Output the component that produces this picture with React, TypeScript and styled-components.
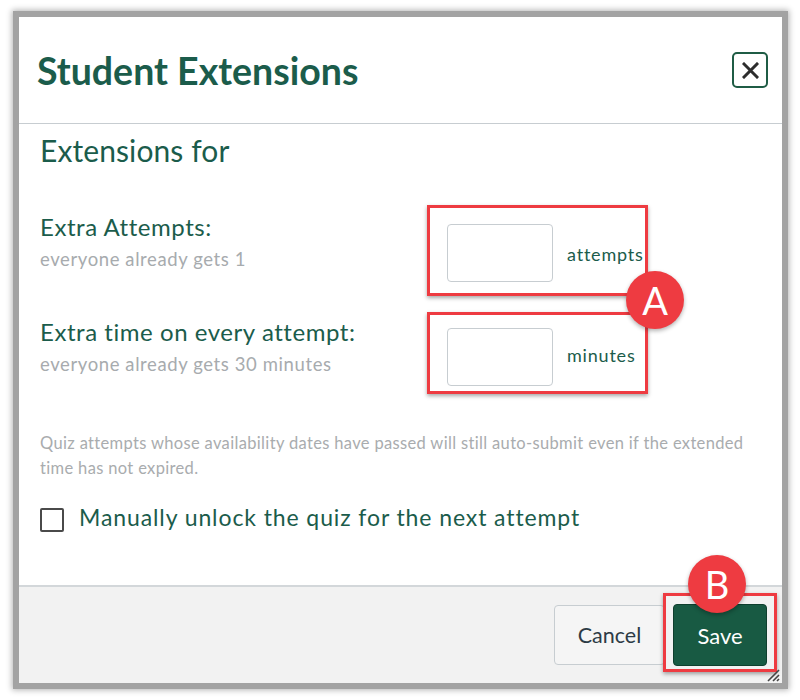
import React from "react";
import styled, { createGlobalStyle } from "styled-components";

const GREEN = "#1b5c4b";
const RED = "#ee3b41";

const Global = createGlobalStyle`
  html, body { margin: 0; padding: 0; background: #ffffff; }
  body { font-family: Lato, "Open Sans", "Liberation Sans", sans-serif; }
  * { box-sizing: border-box; }
`;

const Page = styled.div`
  width: 800px;
  height: 700px;
  padding: 11px 0 0 13px;
`;

const Dialog = styled.div`
  position: relative;
  width: 775px;
  height: 678px;
  border: 6px solid #a3a3a3;
  box-shadow: 0 0 6px 1px rgba(0, 0, 0, 0.3);
  background: #ffffff;
  display: flex;
  flex-direction: column;
`;

const Header = styled.header`
  height: 107px;
  flex: none;
  display: flex;
  align-items: center;
  justify-content: space-between;
  padding: 0 14px 0 18px;
  border-bottom: 1px solid #c7cdd1;
`;

const Title = styled.h1`
  margin: 0;
  font-size: 37.5px;
  line-height: 1.2;
  font-weight: 700;
  color: ${GREEN};
`;

const CloseButton = styled.button`
  width: 36px;
  height: 36px;
  border: 2px solid #1f5c45;
  border-radius: 5px;
  background: #ffffff;
  display: flex;
  align-items: center;
  justify-content: center;
  padding: 0;
  color: #2d2d2d;
`;

const Body = styled.main`
  flex: 1;
  padding: 8px 0 0 21px;
`;

const Heading = styled.h2`
  margin: 0 0 37px;
  font-size: 30px;
  line-height: 1.2;
  font-weight: 400;
  color: ${GREEN};
  letter-spacing: 0.1px;
`;

const Row = styled.div<{ $gap: number }>`
  display: flex;
  align-items: flex-start;
  margin-bottom: ${(p) => p.$gap}px;
`;

const LabelCol = styled.div<{ $top: number }>`
  width: 387px;
  flex: none;
  padding-top: ${(p) => p.$top}px;
`;

const Label = styled.div`
  font-size: 24px;
  line-height: 1.2;
  letter-spacing: 0.55px;
  color: ${GREEN};
`;

const Hint = styled.div`
  margin-top: 6px;
  font-size: 18.5px;
  line-height: 1.2;
  letter-spacing: 0.6px;
  color: #a7abae;
`;

const Highlight = styled.div<{ $h: number; $top: number }>`
  width: 221px;
  height: ${(p) => p.$h}px;
  border: 3px solid ${RED};
  box-shadow: 0 2px 4px rgba(0, 0, 0, 0.35);
  display: flex;
  align-items: flex-start;
  padding: ${(p) => p.$top}px 0 0 17px;
`;

const NumberInput = styled.input`
  width: 106px;
  height: 58px;
  border: 1px solid #c7cdd1;
  border-radius: 4px;
  background: #ffffff;
  margin: 0;
  flex: none;
`;

const Unit = styled.span`
  margin-left: 14px;
  align-self: center;
  margin-top: -8px;
  font-size: 18px;
  line-height: 1.2;
  letter-spacing: 0.8px;
  color: ${GREEN};
  white-space: nowrap;
`;

const Note = styled.p`
  margin: 0 0 23px;
  width: 715px;
  font-size: 16.5px;
  line-height: 25px;
  letter-spacing: 0.34px;
  color: #a9acae;
`;

const CheckRow = styled.label`
  display: flex;
  align-items: center;
  gap: 15px;
`;

const CheckBox = styled.span`
  width: 24px;
  height: 24px;
  border: 2px solid #4a4a4a;
  border-radius: 2px;
  flex: none;
  background: #ffffff;
  margin-top: 4px;
`;

const CheckLabel = styled.span`
  font-size: 23px;
  line-height: 1.2;
  letter-spacing: 0.9px;
  color: ${GREEN};
`;

const Footer = styled.footer`
  height: 98px;
  flex: none;
  background: #f2f2f2;
  border-top: 2px solid #d3d7da;
  display: flex;
  align-items: flex-start;
  justify-content: flex-end;
  padding: 0 5px 0 0;
`;

const CancelButton = styled.button`
  width: 111px;
  height: 60px;
  margin-right: -2px;
  margin-top: 18px;
  background: #f5f5f5;
  border: 1px solid #c7cdd1;
  border-radius: 4px;
  font-family: inherit;
  font-size: 21.5px;
  color: #2d3b45;
`;

const SaveFrame = styled.div`
  position: relative;
  margin-top: 6px;
  border: 3px solid ${RED};
  padding: 8px 7px 3px 7px;
  box-shadow: 0 2px 4px rgba(0, 0, 0, 0.35);
`;

const SaveButton = styled.button`
  width: 94px;
  height: 62px;
  background: #185a43;
  border: 1px solid #0f3f2e;
  border-radius: 4px;
  font-family: inherit;
  font-size: 22px;
  color: #ffffff;
  display: block;
`;

const Badge = styled.div<{ $x: number; $y: number }>`
  position: absolute;
  left: ${(p) => p.$x}px;
  top: ${(p) => p.$y}px;
  width: 58px;
  height: 58px;
  border-radius: 50%;
  background: ${RED};
  box-shadow: 0 2px 4px rgba(0, 0, 0, 0.3);
  color: #ffffff;
  font-size: 38px;
  line-height: 58px;
  text-align: center;
  z-index: 2;
`;

const Grip = styled.svg`
  position: absolute;
  right: 2px;
  bottom: 1px;
`;

export default function App() {
  return (
    <Page>
      <Global />
      <Dialog>
        <Header>
          <Title>Student Extensions</Title>
          <CloseButton aria-label="Close">
            <svg width="17" height="17" viewBox="0 0 17 17">
              <path d="M2 2 L15 15 M15 2 L2 15" stroke="#2d2d2d" strokeWidth="3" strokeLinecap="square" />
            </svg>
          </CloseButton>
        </Header>
        <Body>
          <Heading>Extensions for</Heading>
          <Row $gap={16}>
            <LabelCol $top={8}>
              <Label>Extra Attempts:</Label>
              <Hint>everyone already gets 1</Hint>
            </LabelCol>
            <Highlight $h={91} $top={16}>
              <NumberInput type="text" />
              <Unit>attempts</Unit>
            </Highlight>
          </Row>
          <Row $gap={37}>
            <LabelCol $top={6}>
              <Label>Extra time on every attempt:</Label>
              <Hint>everyone already gets 30 minutes</Hint>
            </LabelCol>
            <Highlight $h={82} $top={13}>
              <NumberInput type="text" />
              <Unit>minutes</Unit>
            </Highlight>
          </Row>
          <Note>
            Quiz attempts whose availability dates have passed will still auto-submit even if the extended time has not expired.
          </Note>
          <CheckRow>
            <CheckBox />
            <CheckLabel>Manually unlock the quiz for the next attempt</CheckLabel>
          </CheckRow>
        </Body>
        <Footer>
          <CancelButton>Cancel</CancelButton>
          <SaveFrame>
            <SaveButton>Save</SaveButton>
          </SaveFrame>
        </Footer>
        <Badge $x={607} $y={254}>A</Badge>
        <Badge $x={669} $y={538}>B</Badge>
        <Grip width="16" height="16" viewBox="0 0 16 16">
          <path d="M4 15 L15 4 M9 15 L15 9 M13 15 L15 13" stroke="#444" strokeWidth="1.6" />
        </Grip>
      </Dialog>
    </Page>
  );
}
